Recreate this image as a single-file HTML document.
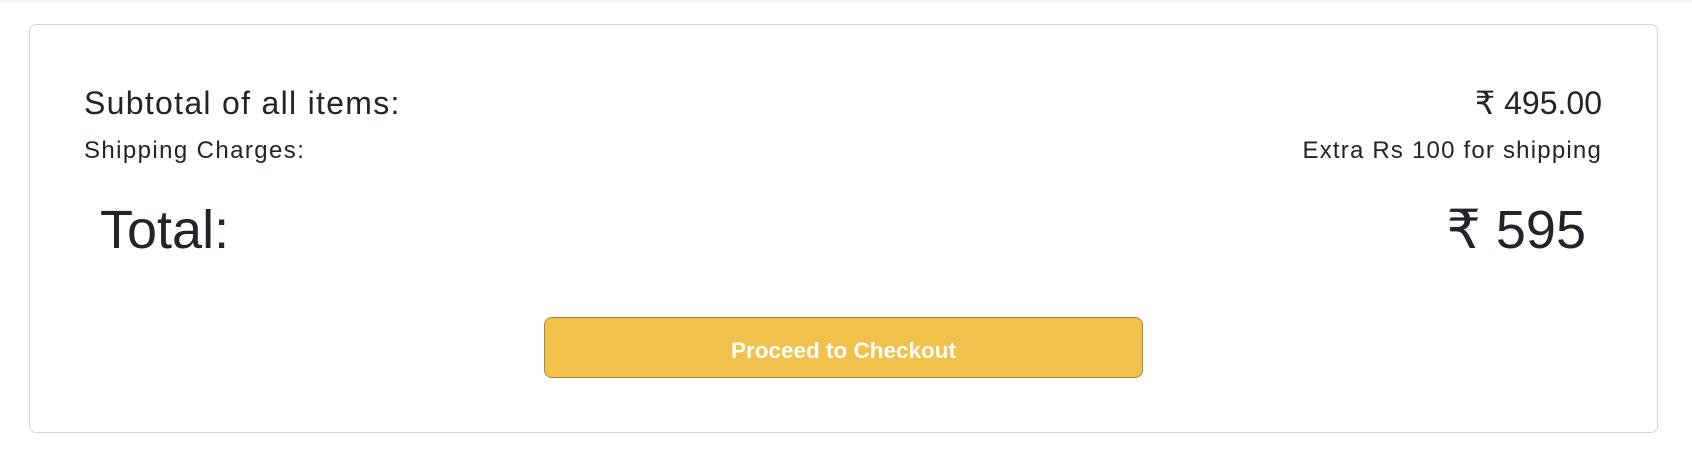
<!DOCTYPE html>
<html><head><meta charset="utf-8"><style>
html,body{margin:0;padding:0;background:#fff;width:1692px;height:469px;overflow:hidden;font-family:"Liberation Sans",sans-serif;color:#212529}
.top{position:absolute;left:0;right:0;top:0;height:4px;background:linear-gradient(#f3f3f3,#fff)}
.card{position:absolute;left:29px;top:24px;width:1629px;height:409px;border:1px solid #d6d6d6;border-radius:7px;box-sizing:border-box}
.t{position:absolute;white-space:nowrap;line-height:1}
.btn{position:absolute;left:544px;top:317px;width:599px;height:61px;box-sizing:border-box;background:#f0c14b;border:1px solid #a88734;border-radius:8px;color:#fff;font-weight:bold;font-size:22.5px;text-align:center;line-height:65px}
</style></head><body>
<div class="top"></div>
<div class="card"></div>
<div class="t" style="left:84px;top:87px;font-size:32px;letter-spacing:1.3px">Subtotal of all items:</div>
<div class="t" style="right:90px;top:87px;font-size:32px">₹ 495.00</div>
<div class="t" style="left:84px;top:139px;font-size:24px;letter-spacing:1.4px">Shipping Charges:</div>
<div class="t" style="right:90px;top:139px;font-size:24px;letter-spacing:1.2px">Extra Rs 100 for shipping</div>
<div class="t" style="left:100px;top:203px;font-size:54px">Total:</div>
<div class="t" style="right:106px;top:203px;font-size:54px">₹ 595</div>
<div class="btn">Proceed to Checkout</div>
</body></html>
